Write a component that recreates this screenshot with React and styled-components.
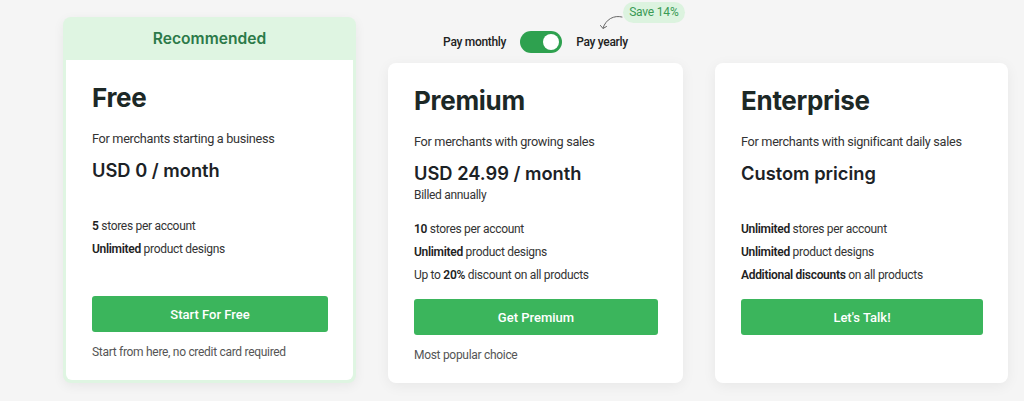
import React from "react";
import styled, { createGlobalStyle } from "styled-components";

const Global = createGlobalStyle`
  html, body { margin: 0; padding: 0; background: #f5f5f5; }
  body { font-family: Roboto, "Liberation Sans", Arial, sans-serif; color: #333; }
  * { box-sizing: border-box; }
`;

const Page = styled.div`
  width: 1024px;
  height: 401px;
  overflow: hidden;
  padding: 17px 0 0 63px;
  background: #f5f5f5;
`;

const Grid = styled.div`
  display: grid;
  grid-template-columns: 293px 295px 293px;
  column-gap: 32px;
  align-items: end;
`;

const Recommended = styled.div`
  background: #dff5e2;
  border-radius: 8px;
  padding: 0 3px 3px;
  box-shadow: 0 3px 12px rgba(0, 0, 0, 0.06);
`;

const RecHeader = styled.div`
  height: 43px;
  display: flex;
  align-items: center;
  justify-content: center;
  font-family: Inter, "Liberation Sans", sans-serif;
  font-weight: 600;
  font-size: 15.6px;
  color: #2c7a49;
`;

const Column = styled.div`
  display: flex;
  flex-direction: column;
  align-items: stretch;
`;

const ToggleRow = styled.div`
  display: flex;
  align-items: center;
  justify-content: center;
  gap: 14px;
  height: 22px;
  margin-bottom: 10px;
  font-size: 12px;
  letter-spacing: -0.3px;
  font-weight: 500;
  color: #222;
`;

const Switch = styled.div`
  width: 42px;
  height: 22px;
  border-radius: 11px;
  background: #2ea14f;
  display: flex;
  align-items: center;
  justify-content: flex-end;
  padding: 0 3px;
`;

const Knob = styled.div`
  width: 16px;
  height: 16px;
  border-radius: 50%;
  background: #fff;
`;

const YearlyLabel = styled.span`
  position: relative;
`;

const Badge = styled.span`
  position: absolute;
  left: 47px;
  top: -33px;
  white-space: nowrap;
  background: #dcf3df;
  color: #3a9a55;
  font-size: 12px;
  letter-spacing: -0.2px;
  line-height: 13px;
  font-weight: 400;
  padding: 4px 6px 4px 6px;
  border-radius: 11px;
`;

const Arrow = styled.svg`
  position: absolute;
  left: 24px;
  top: -20px;
  overflow: visible;
`;

const Card = styled.div`
  background: #fff;
  border-radius: ${(p) => (p.$inner ? "0 0 6px 6px" : "8px")};
  height: 320px;
  padding: 22px 25px 0 26px;
  display: flex;
  flex-direction: column;
  box-shadow: ${(p) => (p.$inner ? "none" : "0 3px 14px rgba(0, 0, 0, 0.06)")};
`;

const Title = styled.h2`
  margin: 0;
  font-family: Inter, "Liberation Sans", sans-serif;
  font-weight: 700;
  font-size: 26px;
  line-height: 32px;
  color: #1c2826;
  letter-spacing: -0.3px;
`;

const Subtitle = styled.p`
  margin: 16px 0 0;
  font-size: 12.7px;
  letter-spacing: -0.3px;
  line-height: 18px;
  color: #333;
`;

const PriceBlock = styled.div`
  margin-top: 10px;
  min-height: 43px;
`;

const Price = styled.div`
  font-family: Inter, "Liberation Sans", sans-serif;
  font-weight: 600;
  font-size: 18.3px;
  line-height: 24px;
  color: #1c2226;
`;

const Billed = styled.div`
  margin-top: 1px;
  font-size: 12px;
  letter-spacing: -0.3px;
  line-height: 18px;
  color: #333;
`;

const Features = styled.ul`
  list-style: none;
  margin: 14px 0 0;
  padding: 0;
  min-height: 69px;
`;

const Feature = styled.li`
  font-size: 12px;
  letter-spacing: -0.3px;
  line-height: 23px;
  color: #333;
  b { font-weight: 600; color: #222; }
`;

const Button = styled.button`
  margin-top: 12px;
  height: 36px;
  width: 100%;
  border: none;
  border-radius: 3px;
  background: #3bb55c;
  color: #fff;
  font-family: Roboto, "Liberation Sans", sans-serif;
  font-weight: 500;
  font-size: 13px;
  cursor: pointer;
`;

const Note = styled.p`
  margin: 11px 0 0;
  font-size: 12px;
  letter-spacing: -0.3px;
  line-height: 18px;
  color: #555;
`;

export default function App() {
  return (
    <>
      <Global />
      <Page>
        <Grid>
          <Recommended>
            <RecHeader>Recommended</RecHeader>
            <Card $inner>
              <Title>Free</Title>
              <Subtitle>For merchants starting a business</Subtitle>
              <PriceBlock>
                <Price>USD 0 / month</Price>
              </PriceBlock>
              <Features>
                <Feature><b>5</b> stores per account</Feature>
                <Feature><b>Unlimited</b> product designs</Feature>
              </Features>
              <Button>Start For Free</Button>
              <Note>Start from here, no credit card required</Note>
            </Card>
          </Recommended>

          <Column>
            <ToggleRow>
              <span>Pay monthly</span>
              <Switch><Knob /></Switch>
              <YearlyLabel>
                Pay yearly
                <Arrow width="24" height="16" viewBox="0 0 24 16">
                  <path d="M22 2 C14 0 6 4 3 13" fill="none" stroke="#666" strokeWidth="1" strokeLinecap="round" />
                  <path d="M0.5 10.5 L3 13.5 L6.5 11.5" fill="none" stroke="#666" strokeWidth="1" strokeLinecap="round" strokeLinejoin="round" />
                </Arrow>
                <Badge>Save 14%</Badge>
              </YearlyLabel>
            </ToggleRow>
            <Card>
              <Title>Premium</Title>
              <Subtitle>For merchants with growing sales</Subtitle>
              <PriceBlock>
                <Price>USD 24.99 / month</Price>
                <Billed>Billed annually</Billed>
              </PriceBlock>
              <Features>
                <Feature><b>10</b> stores per account</Feature>
                <Feature><b>Unlimited</b> product designs</Feature>
                <Feature>Up to <b>20%</b> discount on all products</Feature>
              </Features>
              <Button>Get Premium</Button>
              <Note>Most popular choice</Note>
            </Card>
          </Column>

          <Card>
            <Title>Enterprise</Title>
            <Subtitle>For merchants with significant daily sales</Subtitle>
            <PriceBlock>
              <Price>Custom pricing</Price>
            </PriceBlock>
            <Features>
              <Feature><b>Unlimited</b> stores per account</Feature>
              <Feature><b>Unlimited</b> product designs</Feature>
              <Feature><b>Additional discounts</b> on all products</Feature>
            </Features>
            <Button>Let's Talk!</Button>
          </Card>
        </Grid>
      </Page>
    </>
  );
}
